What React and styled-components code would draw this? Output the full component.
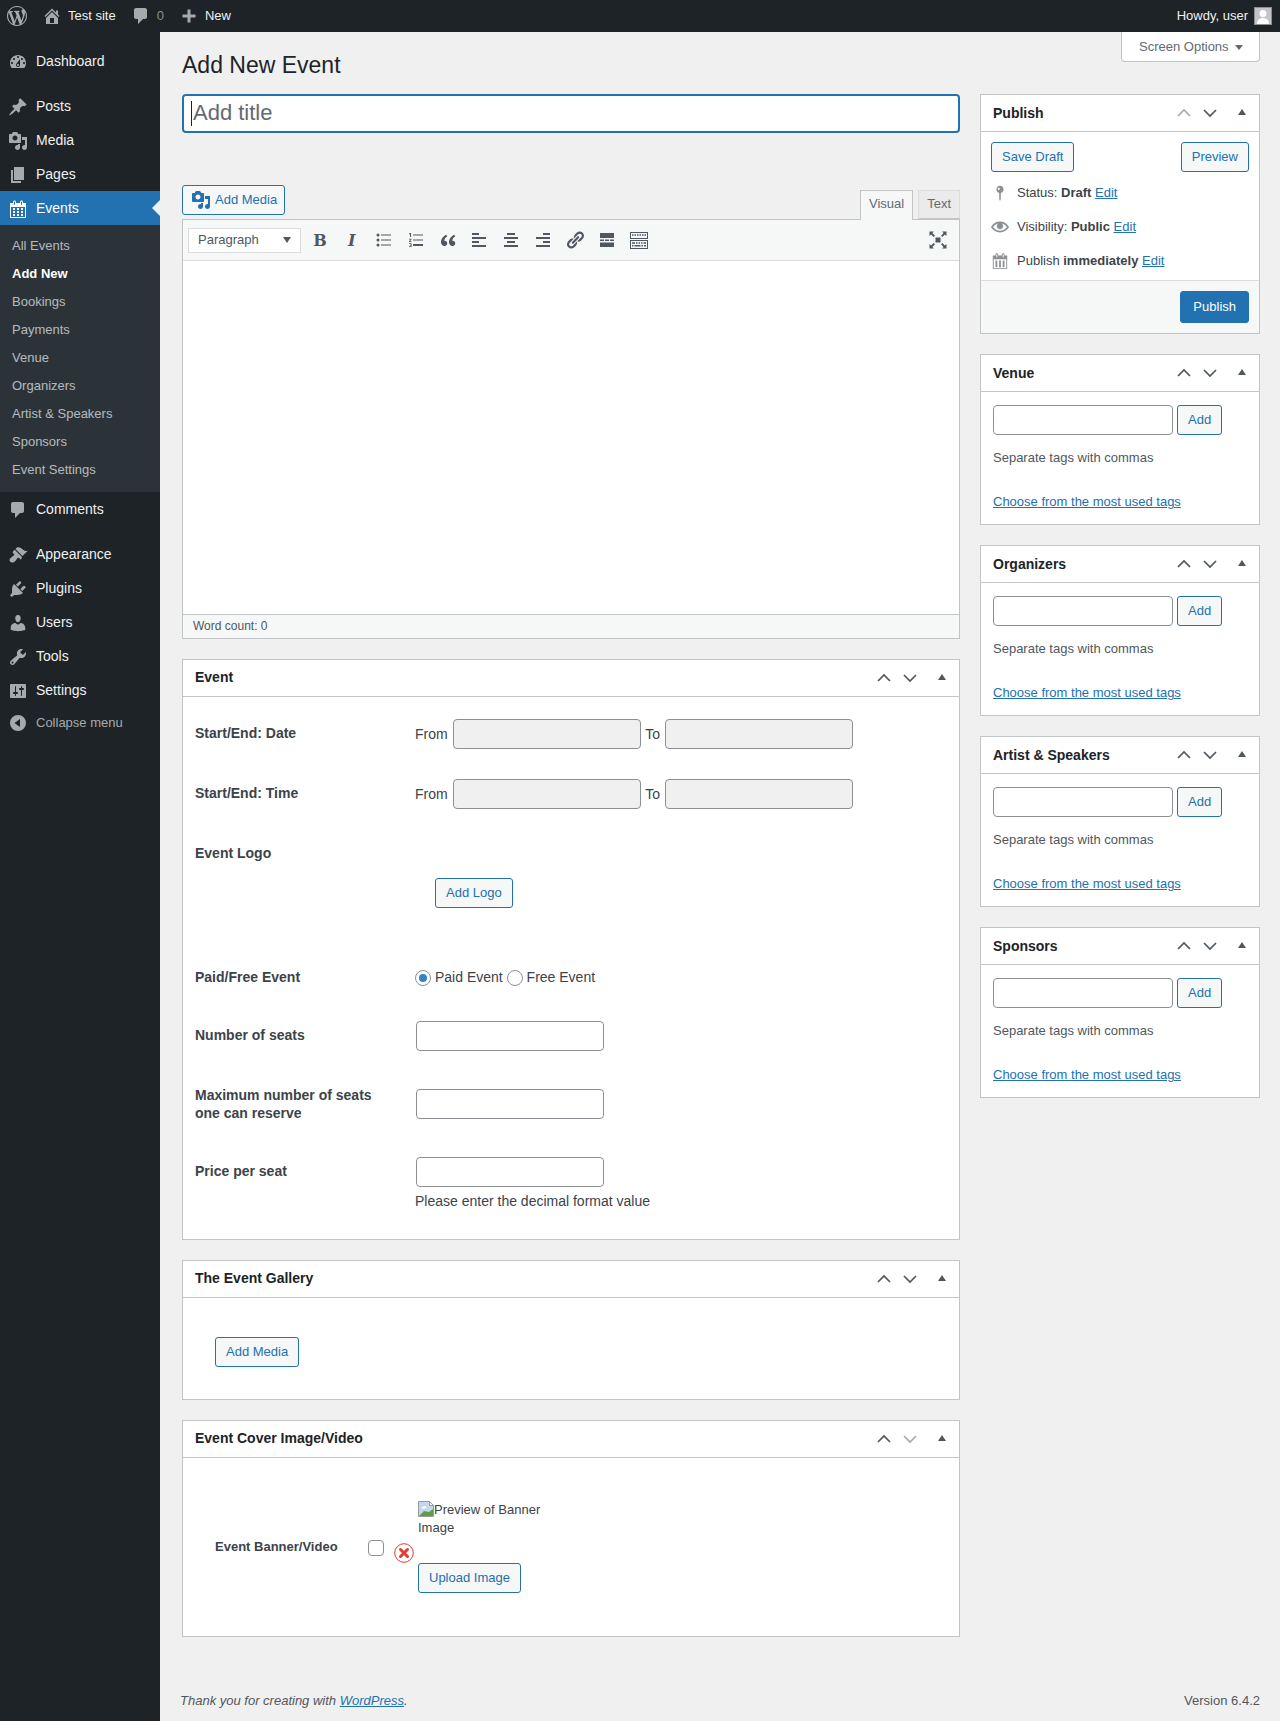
import React from 'react'
import styled, { createGlobalStyle } from 'styled-components'

const GlobalStyle = createGlobalStyle`
  * { box-sizing: border-box; }
  html, body { margin: 0; padding: 0; background: #f0f0f1; }
  body { font-family: "Liberation Sans", Arial, sans-serif; font-size: 13px; color: #3c434a; line-height: 1.4; }
`

const P = {
  logo: 'M20 10c0-5.51-4.49-10-10-10C4.48 0 0 4.49 0 10c0 5.52 4.48 10 10 10 5.51 0 10-4.48 10-10zM7.78 15.37L4.37 6.22c.55-.02 1.17-.08 1.17-.08.5-.06.44-1.13-.06-1.11 0 0-1.45.11-2.37.11-.18 0-.37 0-.58-.01C4.12 2.69 6.87 1.11 10 1.11c2.33 0 4.45.87 6.05 2.34-.68-.11-1.65.39-1.65 1.58 0 .74.45 1.36.9 2.1.35.61.55 1.36.55 2.46 0 1.49-1.4 5-1.4 5l-3.03-8.37c.54-.02.82-.17.82-.17.5-.05.44-1.25-.06-1.22 0 0-1.44.12-2.38.12-.87 0-2.33-.12-2.33-.12-.5-.03-.56 1.2-.06 1.22l.92.08 1.26 3.41zM17.41 10c.24-.64.74-1.87.43-4.25.7 1.29 1.05 2.71 1.05 4.25 0 3.29-1.73 6.24-4.4 7.78.97-2.59 1.94-5.2 2.92-7.78zM6.1 18.09C3.12 16.65 1.11 13.53 1.11 10c0-1.3.23-2.48.72-3.59C3.25 10.3 4.67 14.2 6.1 18.09zm4.03-6.63l2.58 6.98c-.86.29-1.76.45-2.71.45-.79 0-1.57-.11-2.29-.33.81-2.38 1.62-4.74 2.42-7.1z',
  home: 'M16 8.5l1.53 1.53-1.06 1.06L10 4.62l-6.47 6.47-1.06-1.06L10 2.5l4 4v-2h2v4zm-6-2.46l6 5.99V18H4v-5.97zM12 17v-5H8v5h4z',
  comment: 'M5 2h9c1.1 0 2 .9 2 2v7c0 1.1-.9 2-2 2h-2l-5 5v-5H5c-1.1 0-2-.9-2-2V4c0-1.1.9-2 2-2z',
  plus: 'M16.5 8.5v3h-5v5h-3v-5h-5v-3h5v-5h3v5z',
  dashboard: 'M3.76 16h12.48c1.1-1.37 1.76-3.11 1.76-5 0-4.42-3.58-8-8-8s-8 3.58-8 8c0 1.89.66 3.63 1.76 5zM10 4c.55 0 1 .45 1 1s-.45 1-1 1-1-.45-1-1 .45-1 1-1zM6 6c.55 0 1 .45 1 1s-.45 1-1 1-1-.45-1-1 .45-1 1-1zm8 0c.55 0 1 .45 1 1s-.45 1-1 1-1-.45-1-1 .45-1 1-1zm-5.37 5.55L12 7v6c0 1.1-.9 2-2 2s-2-.9-2-2c0-.57.24-1.08.63-1.45zM4 10c.55 0 1 .45 1 1s-.45 1-1 1-1-.45-1-1 .45-1 1-1zm12 0c.55 0 1 .45 1 1s-.45 1-1 1-1-.45-1-1 .45-1 1-1zm-5 3c0-.55-.45-1-1-1s-1 .45-1 1 .45 1 1 1 1-.45 1-1z',
  post: 'M10.44 3.02l1.82-1.82 6.36 6.35-1.83 1.82c-1.05-.68-2.48-.57-3.41.36l-.75.75c-.92.93-1.04 2.35-.35 3.41l-1.83 1.82-2.41-2.41-2.8 2.79c-.42.42-3.38 2.71-3.8 2.29s1.86-3.39 2.28-3.81l2.79-2.79L4.1 9.36l1.83-1.82c1.05.69 2.48.57 3.4-.36l.75-.75c.93-.92 1.05-2.35.36-3.41z',
  media: 'M13 11V4c0-.55-.45-1-1-1h-1.67L9 1H5L3.67 3H2c-.55 0-1 .45-1 1v7c0 .55.45 1 1 1h10c.55 0 1-.45 1-1zM7 4.5c1.38 0 2.5 1.12 2.5 2.5S8.38 9.5 7 9.5 4.5 8.38 4.5 7 5.62 4.5 7 4.5zM14 6h5v10.5c0 1.38-1.12 2.5-2.5 2.5S14 17.88 14 16.5s1.12-2.5 2.5-2.5c.17 0 .34.02.5.05V9h-3V6zm-4 8.05V13h2v3.5c0 1.38-1.12 2.5-2.5 2.5S7 17.88 7 16.5 8.12 14 9.5 14c.17 0 .34.02.5.05z',
  page: 'M6 15V2h10v13H6zm-1 1h8v2H3V5h2v11z',
  calendar: 'M15 4h3v15H2V4h3V3c0-.41.15-.76.44-1.06.29-.29.65-.44 1.06-.44s.77.15 1.06.44c.29.3.44.65.44 1.06v1h4V3c0-.41.15-.76.44-1.06.29-.29.65-.44 1.06-.44s.77.15 1.06.44c.29.3.44.65.44 1.06v1zM6 3v2.5c0 .14.05.26.15.36.09.09.21.14.35.14s.26-.05.35-.14c.1-.1.15-.22.15-.36V3c0-.14-.05-.26-.15-.35-.09-.1-.21-.15-.35-.15s-.26.05-.35.15c-.1.09-.15.21-.15.35zm7 0v2.5c0 .14.05.26.14.36.1.09.22.14.36.14s.26-.05.36-.14c.09-.1.14-.22.14-.36V3c0-.14-.05-.26-.14-.35-.1-.1-.22-.15-.36-.15s-.26.05-.36.15c-.09.09-.14.21-.14.35zm4 15V8H3v10h14zM7 9v2H5V9h2zm2 0h2v2H9V9zm4 2V9h2v2h-2zm-6 1v2H5v-2h2zm2 0h2v2H9v-2zm4 2v-2h2v2h-2zm-6 1v2H5v-2h2zm4 2H9v-2h2v2zm4 0h-2v-2h2v2z',
  appearance: 'M14.48 11.06L7.41 3.99l1.5-1.5c.5-.56 2.3-.47 3.51.32 1.21.8 1.43 1.28 2.91 2.1 1.18.64 2.45 1.26 4.45.85zm-.71.71L6.7 4.7 4.93 6.47c-.39.39-.39 1.02 0 1.41l1.06 1.06c.39.39.39 1.03 0 1.42-.6.6-1.43 1.11-2.21 1.69-.35.26-.7.53-1.01.84C1.43 13.23.99 15.6 2.21 16.82c1.22 1.22 3.59.78 4.93-.56.31-.31.58-.66.84-1.01.58-.78 1.09-1.61 1.69-2.21.39-.39 1.03-.39 1.42 0l1.06 1.06c.39.39 1.02.39 1.41 0z',
  plugins: 'M13.11 4.36L9.87 7.6 8 5.73l3.24-3.24c.35-.34 1.05-.2 1.56.32.52.51.66 1.21.31 1.55zm-8 1.77l.91-1.12 9.01 9.01-1.19.84c-.71.71-2.63 1.16-3.82 1.16H6.14L4.9 17.26c-.59.59-1.54.59-2.12 0-.59-.58-.59-1.53 0-2.12l1.24-1.24v-3.88c0-1.13.4-3.19 1.09-3.89zm7.26 3.97l3.24-3.24c.34-.35 1.04-.21 1.55.31.52.51.66 1.21.31 1.55l-3.24 3.25z',
  users: 'M10 9.25c-2.27 0-2.73-3.44-2.73-3.44C7 4.02 7.82 2 9.97 2c2.16 0 2.98 2.02 2.71 3.81 0 0-.41 3.44-2.68 3.44zm0 2.57L12.72 10c2.39 0 4.52 2.33 4.52 4.53v2.49s-3.65 1.13-7.24 1.13c-3.65 0-7.24-1.13-7.24-1.13v-2.49c0-2.25 1.94-4.48 4.47-4.48z',
  tools: 'M16.68 9.77c-1.34 1.34-3.3 1.67-4.95.99l-5.41 6.52c-.99.99-2.59.99-3.58 0s-.99-2.59 0-3.57l6.52-5.42c-.68-1.65-.35-3.61.99-4.95 1.28-1.28 3.12-1.62 4.72-1.06l-2.89 2.89 2.82 2.82 2.86-2.87c.53 1.58.18 3.39-1.08 4.65zM3.81 16.21c.4.39 1.04.39 1.43 0 .4-.4.4-1.04 0-1.43-.39-.4-1.03-.4-1.43 0-.39.39-.39 1.03 0 1.43z',
  settings: 'M18 16V4c0-.55-.45-1-1-1H3c-.55 0-1 .45-1 1v12c0 .55.45 1 1 1h14c.55 0 1-.45 1-1zM8 11h1c.55 0 1 .45 1 1s-.45 1-1 1H8v1.5c0 .28-.22.5-.5.5s-.5-.22-.5-.5V13H6c-.55 0-1-.45-1-1s.45-1 1-1h1V5.5c0-.28.22-.5.5-.5s.5.22.5.5V11zm5-2h-1c-.55 0-1-.45-1-1s.45-1 1-1h1V5.5c0-.28.22-.5.5-.5s.5.22.5.5V7h1c.55 0 1 .45 1 1s-.45 1-1 1h-1v5.5c0 .28-.22.5-.5.5s-.5-.22-.5-.5V9z',
  collapse: 'M10 2a8 8 0 1 0 0 16 8 8 0 0 0 0-16zm2 4v8L6.5 10z',
  link: 'M17.74 2.76c1.68 1.69 1.68 4.41 0 6.1l-1.53 1.52c-1.12 1.12-2.7 1.47-4.14 1.09l2.62-2.61.76-.77.76-.76c.84-.84.84-2.2 0-3.04-.84-.85-2.2-.85-3.04 0l-.77.76-3.38 3.38c-.37-1.44-.02-3.02 1.1-4.14l1.52-1.53c1.69-1.68 4.42-1.68 6.1 0zM8.59 13.43l5.34-5.34c.42-.42.42-1.1 0-1.52-.44-.43-1.13-.39-1.53 0l-5.33 5.34c-.42.42-.42 1.1 0 1.52.44.43 1.13.39 1.52 0zm-.76 2.29l4.14-4.15c.38 1.44.03 3.02-1.09 4.14l-1.52 1.53c-1.69 1.68-4.41 1.68-6.1 0-1.68-1.68-1.68-4.42 0-6.1l1.53-1.52c1.12-1.12 2.7-1.47 4.14-1.1l-4.14 4.15c-.85.84-.85 2.2 0 3.05.84.84 2.2.84 3.04 0z',
  ul: 'M4 3.5a1.5 1.5 0 1 1 0 3 1.5 1.5 0 0 1 0-3zm0 5a1.5 1.5 0 1 1 0 3 1.5 1.5 0 0 1 0-3zm0 5a1.5 1.5 0 1 1 0 3 1.5 1.5 0 0 1 0-3zM7 4.5h10v1H7zm0 5h10v1H7zm0 5h10v1H7z',
  ol: 'M7 4.5h10v1H7zm0 5h10v1H7zm0 4.5h10v2H7zM4 3h1v4H4V4.2H3v-.6zM3 8.8h2.5v.8L4 11.2h1.5v.8H3v-.8l1.5-1.6H3zm0 4.5h2.5V17H3v-.7h1.6v-.7h-.9V15h.9v-1H3z',
  quote: 'M9.3 13.3c0 1.5-1.2 2.7-2.7 2.7C4.7 16 3 14.5 3 12.2 3 9 5.4 6 8.3 4.8l.9 1.6C7.5 7.3 6.4 8.7 6.2 10.7c1.7-.3 3.1 1 3.1 2.6zm8 0c0 1.5-1.2 2.7-2.7 2.7-1.9 0-3.6-1.5-3.6-3.8C11 9 13.4 6 16.3 4.8l.9 1.6c-1.7.9-2.8 2.3-3 4.3 1.7-.3 3.1 1 3.1 2.6z',
  alignLeft: 'M3 3h7v2H3zm0 4h14v2H3zm0 4h7v2H3zm0 4h14v2H3z',
  alignCenter: 'M6 3h8v2H6zM3 7h14v2H3zm3 4h8v2H6zM3 15h14v2H3z',
  alignRight: 'M10 3h7v2h-7zM3 7h14v2H3zm7 4h7v2h-7zM3 15h14v2H3z',
  more: 'M3 3h14v5H3zm0 6.5h4V11H3zm5 0h4V11H8zm5 0h4V11h-4zM3 12.5h14V17H3z',
  kitchen: 'M1 2h18v7H1zm1 1v5h16V3zm1 1.2h1.5v1.5H3zm2.5 0H7v1.5H5.5zm2.5 0h1.5v1.5H8zm2.5 0H12v1.5h-1.5zm2.5 0h1.5v1.5H13zm2.5 0H17v1.5h-1.5zM1 10h18v9H1zm1 1v7h16v-7zm1 1.2h3v1.5H3zm4 0h1.5v1.5H7zm2.5 0H11v1.5H9.5zm2.5 0h1.5v1.5H12zm2.5 0H17v1.5h-2.5zM3 15h1.5v1.5H3zm2.5 0h6v1.5h-6zm7 0H14v1.5h-1.5zm2.5 0h2v1.5h-2z',
  fullscreen: 'M1 1.5h5L4.4 3.1 7 5.7 5.7 7 3.1 4.4 1.5 6V1.5zm13 0h4.5V6l-1.6-1.6L14.3 7 13 5.7l2.6-2.6zM7.5 7.5h5v5h-5zM5.7 13 7 14.3l-2.6 2.6L6 18.5H1.5V14l1.6 1.6zm8.6 0 2.6 2.6 1.6-1.6v4.5H14l1.6-1.6L13 14.3z',
  pin: 'M14 6c0-2.21-1.79-4-4-4S6 3.79 6 6c0 1.91 1.34 3.5 3.13 3.9L9.2 17l.8 2 .8-2 .07-7.1C12.66 9.5 14 7.91 14 6zM8.6 4.2a1.2 1.2 0 1 1 0 2.4 1.2 1.2 0 0 1 0-2.4z',
  eye: 'M19.7 9.4C17.7 6 14 3.9 10 3.9S2.3 6 .3 9.4L0 10l.3.6c2 3.4 5.7 5.5 9.7 5.5s7.7-2.1 9.7-5.5l.3-.6-.3-.6zM10 14.1c-3.1 0-6-1.6-7.7-4.1C3.6 8 5.7 6.6 8 6.1c-.9.6-1.5 1.7-1.5 2.9 0 1.9 1.6 3.5 3.5 3.5s3.5-1.6 3.5-3.5c0-1.2-.6-2.2-1.5-2.9 2.3.5 4.4 1.9 5.7 3.9-1.7 2.5-4.6 4.1-7.7 4.1z',
  schedule: 'M15 4h3v15H2V4h3V3c0-.8.7-1.5 1.5-1.5S8 2.2 8 3v1h4V3c0-.8.7-1.5 1.5-1.5S15 2.2 15 3zM6 2.5V6h1V2.5zm7 0V6h1V2.5zM17 18V8H3v10zM5 9.5h2V17H5zm4 0h2V17H9zm4 0h2V17h-2z',
}

const Ico = ({ d, size = 20 }) => (
  <svg width={size} height={size} viewBox="0 0 20 20" fill="currentColor" fillRule="evenodd" aria-hidden="true">
    <path d={d} />
  </svg>
)

const Page = styled.div`
  width: 1280px;
  min-height: 1721px;
  display: flex;
  flex-direction: column;
`
const AdminBar = styled.header`
  height: 32px;
  background: #1d2327;
  color: #f0f0f1;
  display: flex;
  align-items: center;
  justify-content: space-between;
  padding: 0 8px 0 7px;
`
const BarGroup = styled.div`
  display: flex;
  align-items: center;
`
const BarItem = styled.span`
  display: flex;
  align-items: center;
  margin-left: ${p => p.$ml || 0}px;
  color: ${p => p.$dim ? '#8c8f94' : '#f0f0f1'};
  svg { color: #a7aaad; display: block; }
`
const BarText = styled.span`
  margin-left: ${p => p.$ml || 0}px;
`
const Avatar = styled.span`
  width: 18px;
  height: 18px;
  margin-left: 6px;
  background: #c3c4c7;
  border: 1px solid #8c8f94;
  color: #fff;
  display: block;
  svg { display: block; }
`
const Shell = styled.div`
  flex: 1;
  display: flex;
`
const Sidebar = styled.nav`
  width: 160px;
  flex: none;
  background: #1d2327;
  padding-top: 12px;
`
const MenuItem = styled.div`
  position: relative;
  height: ${p => p.$h || 34}px;
  margin-top: ${p => p.$gap || 0}px;
  display: flex;
  align-items: center;
  gap: 8px;
  padding: 2px 0 0 8px;
  font-size: 14px;
  color: ${p => p.$active ? '#fff' : '#f0f0f1'};
  background: ${p => p.$active ? '#2271b1' : 'transparent'};
  svg { color: ${p => p.$active ? '#fff' : '#a7aaad'}; display: block; flex: none; }
  ${p => p.$active && `
    &::after {
      content: '';
      position: absolute;
      right: 0;
      top: 9px;
      border: 8px solid transparent;
      border-right-color: #f0f0f1;
      border-left-width: 0;
    }
  `}
`
const CollapseLabel = styled.span`
  font-size: 13px;
  color: #a7aaad;
`
const SubMenu = styled.div`
  background: #2c3338;
  padding: 7px 0 8px;
`
const SubItem = styled.div`
  height: 28px;
  line-height: 28px;
  padding-left: 12px;
  font-size: 13px;
  color: ${p => p.$current ? '#fff' : 'rgba(240,246,252,.7)'};
  font-weight: ${p => p.$current ? 600 : 400};
`
const Main = styled.main`
  flex: 1;
  display: flex;
  flex-direction: column;
  padding: 0 20px;
`
const ScreenBar = styled.div`
  display: flex;
  justify-content: flex-end;
`
const ScreenTab = styled.div`
  width: 139px;
  height: 30px;
  background: #fff;
  border: 1px solid #c3c4c7;
  border-top: none;
  border-radius: 0 0 4px 4px;
  padding: 1px 0 0 17px;
  display: flex;
  align-items: center;
  gap: 6px;
  color: #646970;
  &::after {
    content: '';
    border: 4px solid transparent;
    border-top: 5px solid #646970;
    border-bottom: none;
  }
`
const Heading = styled.h1`
  margin: -11px 0 14px 2px;
  font-size: 23px;
  font-weight: 400;
  line-height: 29px;
  color: #1d2327;
`
const Columns = styled.div`
  display: flex;
  gap: 20px;
  padding-left: 2px;
  align-items: flex-start;
`
const LeftCol = styled.div`
  width: 778px;
  flex: none;
`
const RightCol = styled.aside`
  width: 280px;
  flex: none;
`
const TitleBox = styled.div`
  height: 39px;
  background: #fff;
  border: 2px solid #2271b1;
  border-radius: 4px;
  padding-left: 7px;
  display: flex;
  align-items: center;
  font-size: 22px;
  color: #646970;
  margin-bottom: 52px;
`
const Caret = styled.span`
  width: 1px;
  height: 25px;
  background: #1d2327;
  margin-right: 1px;
`
const EditorTop = styled.div`
  display: flex;
  justify-content: space-between;
  align-items: flex-end;
  height: 34px;
`
const Btn = styled.button`
  height: 30px;
  padding: 0 10px 2px;
  font: 13px "Liberation Sans", Arial, sans-serif;
  color: #2271b1;
  background: #f6f7f7;
  border: 1px solid #2271b1;
  border-radius: 3px;
  display: inline-flex;
  align-items: center;
  gap: 5px;
  margin-left: ${p => p.$ml || 0}px;
  margin-top: ${p => p.$mt || 0}px;
`
const MediaBtn = styled(Btn)`
  align-self: flex-start;
  padding: 0 7px 2px 8px;
  gap: 4px;
  svg { margin-top: 2px; }
`
const Tabs = styled.div`
  display: flex;
  gap: 5px;
  margin-bottom: -1px;
  position: relative;
`
const Tab = styled.div`
  height: ${p => p.$active ? 30 : 29}px;
  margin-bottom: ${p => p.$active ? 0 : 1}px;
  padding: 0 8px;
  line-height: 26px;
  background: ${p => p.$active ? '#f6f7f7' : '#ebebeb'};
  border: 1px solid ${p => p.$active ? '#c3c4c7' : '#dcdcde'};
  border-bottom: ${p => p.$active ? 'none' : '1px solid #c3c4c7'};
  color: #646970;
`
const Editor = styled.div`
  border: 1px solid #c3c4c7;
  background: #fff;
`
const Toolbar = styled.div`
  height: 41px;
  background: #f6f7f7;
  border-bottom: 1px solid #dcdcde;
  display: flex;
  align-items: center;
  padding-left: 5px;
  color: #50575e;
`
const FormatSelect = styled.div`
  width: 113px;
  height: 25px;
  background: #fff;
  border: 1px solid #dcdcde;
  padding: 0 9px;
  display: flex;
  align-items: center;
  justify-content: space-between;
  color: #50575e;
  margin-right: 3px;
  &::after {
    content: '';
    border: 4.5px solid transparent;
    border-top: 6px solid #50575e;
    border-bottom: none;
  }
`
const ToolBtn = styled.span`
  width: 31.9px;
  height: 24px;
  display: flex;
  align-items: center;
  justify-content: center;
  svg { display: block; }
`
const ToolGlyph = styled(ToolBtn)`
  font: ${p => p.$italic ? 'italic' : 'normal'} bold 16px "DejaVu Serif", serif;
`
const ToolEnd = styled(ToolBtn)`
  margin-left: auto;
  margin-right: 5px;
`
const EditorBody = styled.div`
  height: 353px;
`
const WordCount = styled.div`
  height: 24px;
  line-height: 22px;
  padding-left: 10px;
  font-size: 12px;
  background: #f6f7f7;
  border-top: 1px solid #c3c4c7;
  color: #50575e;
`
const Box = styled.section`
  background: #fff;
  border: 1px solid #c3c4c7;
  margin-top: ${p => p.$mt ?? 20}px;
`
const BoxHead = styled.div`
  height: 37px;
  border-bottom: 1px solid #c3c4c7;
  display: flex;
  align-items: center;
  padding-left: 12px;
  font-size: 14px;
  font-weight: 700;
  color: #1d2327;
`
const BoxTitle = styled.span`
  flex: 1;
  padding-top: ${p => p.$side ? 1 : 0}px;
`
const Handle = styled.span`
  width: ${p => p.$wide ? 36 : 26}px;
  height: 36px;
  display: flex;
  align-items: center;
  justify-content: center;
  color: ${p => p.$off ? '#a7aaad' : '#50575e'};
  svg { display: block; }
`
const Toggle = styled.svg`
  margin: -3px 0 0 1px;
`
const EventBody = styled.div`
  padding: 22px 12px 29px;
`
const FieldRow = styled.div`
  display: grid;
  grid-template-columns: 220px 1fr;
  font-size: 14px;
  margin-bottom: ${p => p.$mb || 0}px;
`
const FieldLabel = styled.div`
  font-weight: 700;
  color: #3c434a;
  line-height: ${p => p.$tight ? 18 : 20}px;
  margin-top: ${p => p.$tight ? -3 : 4}px;
  padding-right: 30px;
`
const FieldValue = styled.div`
  display: flex;
  align-items: center;
  align-self: start;
  flex-wrap: wrap;
  min-height: 30px;
`
const FieldStack = styled.div`
  display: flex;
  flex-direction: column;
  align-items: flex-start;
`
const Input = styled.input`
  width: ${p => p.$w || 188}px;
  height: 30px;
  margin: 0 ${p => p.$flush ? 0 : 1}px;
  padding: 0 8px;
  background: ${p => p.$grey ? '#f0f0f1' : '#fff'};
  border: 1px solid #8c8f94;
  border-radius: 4px;
  outline: none;
  display: block;
`
const InlineText = styled.span`
  white-space: pre;
  padding-top: ${p => p.$low ? 2 : 0}px;
`
const Hint = styled.div`
  margin-top: 5px;
  line-height: 18px;
`
const Radio = styled.span`
  width: 16px;
  height: 16px;
  border: 1px solid #8c8f94;
  border-radius: 50%;
  background: #fff;
  display: flex;
  align-items: center;
  justify-content: center;
  margin-right: 4px;
  &::before {
    content: '';
    width: 8px;
    height: 8px;
    border-radius: 50%;
    background: ${p => p.$on ? '#3582c4' : 'transparent'};
  }
`
const GalleryBody = styled.div`
  padding: 39px 32px 32px;
`
const CoverBody = styled.div`
  padding: 43px 0 43px 32px;
  display: flex;
  align-items: center;
`
const CoverLabel = styled.div`
  width: 153px;
  font-weight: 700;
  color: #3c434a;
`
const Check = styled.span`
  width: 16px;
  height: 16px;
  margin: 2px 10px 0 0;
  border: 1px solid #8c8f94;
  border-radius: 4px;
  background: #fff;
`
const RemoveIcon = styled.svg`
  margin: 12px 4px 0 0;
  display: block;
`
const CoverCol = styled.div`
  width: 130px;
  display: flex;
  flex-direction: column;
  align-items: flex-start;
`
const AltText = styled.div`
  line-height: 18px;
  margin-bottom: 26px;
  svg { vertical-align: top; }
`
const PublishActions = styled.div`
  display: flex;
  justify-content: space-between;
  padding: 10px 10px 0;
`
const PubList = styled.div`
  padding: 4px 10px 2px;
`
const PubRow = styled.div`
  height: 34px;
  display: flex;
  align-items: center;
  gap: 8px;
  svg { color: #8c8f94; display: block; flex: none; }
`
const PubFooter = styled.div`
  background: #f6f7f7;
  border-top: 1px solid #dcdcde;
  padding: 10px;
  display: flex;
  justify-content: flex-end;
`
const PrimaryBtn = styled(Btn)`
  height: 32px;
  padding: 0 12px 2px;
  color: #fff;
  background: #2271b1;
`
const A = styled.a`
  color: #2271b1;
  text-decoration: underline;
`
const TagBody = styled.div`
  padding: 13px 12px 13px;
`
const TagRow = styled.div`
  display: flex;
  gap: 4px;
`
const TagHint = styled.div`
  margin-top: 14px;
  line-height: 18px;
  color: #50575e;
`
const TagLink = styled.div`
  margin-top: 26px;
  line-height: 18px;
`
const Footer = styled.footer`
  margin-top: auto;
  display: flex;
  justify-content: space-between;
  line-height: 18px;
  padding-bottom: 11px;
  color: #50575e;
`
const Thanks = styled.em`
  font-style: italic;
`

const Chevron = ({ up }) => (
  <svg width="16" height="10" viewBox="0 0 16 10" fill="none" stroke="currentColor" strokeWidth="1.7">
    <polyline points={up ? '2,8 8,2 14,8' : '2,2 8,8 14,2'} />
  </svg>
)

const Head = ({ title, upOff, downOff, side }) => (
  <BoxHead>
    <BoxTitle $side={side}>{title}</BoxTitle>
    <Handle $off={upOff}><Chevron up /></Handle>
    <Handle $off={downOff}><Chevron /></Handle>
    <Handle $wide>
      <Toggle width="8" height="6" viewBox="0 0 8 6" fill="currentColor"><polygon points="4,0 8,6 0,6" /></Toggle>
    </Handle>
  </BoxHead>
)

const TagBox = ({ title }) => (
  <Box>
    <Head title={title} side />
    <TagBody>
      <TagRow>
        <Input $w={180} $flush />
        <Btn>Add</Btn>
      </TagRow>
      <TagHint>Separate tags with commas</TagHint>
      <TagLink><A>Choose from the most used tags</A></TagLink>
    </TagBody>
  </Box>
)

const DateRange = () => (
  <FieldValue>
    <InlineText $low>From </InlineText>
    <Input $grey readOnly />
    <InlineText $low> To </InlineText>
    <Input $grey readOnly />
  </FieldValue>
)

const subItems = ['All Events', 'Add New', 'Bookings', 'Payments', 'Venue', 'Organizers', 'Artist & Speakers', 'Sponsors', 'Event Settings']
const toolIcons = [P.ul, P.ol, P.quote, P.alignLeft, P.alignCenter, P.alignRight, P.link, P.more, P.kitchen]
const tagBoxes = ['Venue', 'Organizers', 'Artist & Speakers', 'Sponsors']

const App = () => {
  return (
    <Page>
      <GlobalStyle />
      <AdminBar>
        <BarGroup>
          <BarItem><Ico d={P.logo} /></BarItem>
          <BarItem $ml={15}><Ico d={P.home} /></BarItem>
          <BarText $ml={6}>Test site</BarText>
          <BarItem $ml={15}><Ico d={P.comment} /></BarItem>
          <BarItem $ml={6} $dim>0</BarItem>
          <BarItem $ml={15}><Ico d={P.plus} /></BarItem>
          <BarText $ml={6}>New</BarText>
        </BarGroup>
        <BarGroup>
          Howdy, user
          <Avatar>
            <svg width="16" height="16" viewBox="0 0 16 16" fill="currentColor">
              <circle cx="8" cy="5.5" r="3.5" />
              <path d="M2 16c0-4 2.5-6 6-6s6 2 6 6z" />
            </svg>
          </Avatar>
        </BarGroup>
      </AdminBar>
      <Shell>
        <Sidebar>
          <MenuItem><Ico d={P.dashboard} />Dashboard</MenuItem>
          <MenuItem $gap={11}><Ico d={P.post} />Posts</MenuItem>
          <MenuItem><Ico d={P.media} />Media</MenuItem>
          <MenuItem><Ico d={P.page} />Pages</MenuItem>
          <MenuItem $active><Ico d={P.calendar} />Events</MenuItem>
          <SubMenu>
            {subItems.map(s => <SubItem key={s} $current={s === 'Add New'}>{s}</SubItem>)}
          </SubMenu>
          <MenuItem><Ico d={P.comment} />Comments</MenuItem>
          <MenuItem $gap={11}><Ico d={P.appearance} />Appearance</MenuItem>
          <MenuItem><Ico d={P.plugins} />Plugins</MenuItem>
          <MenuItem><Ico d={P.users} />Users</MenuItem>
          <MenuItem><Ico d={P.tools} />Tools</MenuItem>
          <MenuItem><Ico d={P.settings} />Settings</MenuItem>
          <MenuItem $h={30}><Ico d={P.collapse} /><CollapseLabel>Collapse menu</CollapseLabel></MenuItem>
        </Sidebar>
        <Main>
          <ScreenBar><ScreenTab>Screen Options</ScreenTab></ScreenBar>
          <Heading>Add New Event</Heading>
          <Columns>
            <LeftCol>
              <TitleBox><Caret />Add title</TitleBox>
              <EditorTop>
                <MediaBtn><Ico d={P.media} />Add Media</MediaBtn>
                <Tabs>
                  <Tab $active>Visual</Tab>
                  <Tab>Text</Tab>
                </Tabs>
              </EditorTop>
              <Editor>
                <Toolbar>
                  <FormatSelect>Paragraph</FormatSelect>
                  <ToolGlyph>B</ToolGlyph>
                  <ToolGlyph $italic>I</ToolGlyph>
                  {toolIcons.map(d => <ToolBtn key={d}><Ico d={d} /></ToolBtn>)}
                  <ToolEnd><Ico d={P.fullscreen} /></ToolEnd>
                </Toolbar>
                <EditorBody />
                <WordCount>Word count: 0</WordCount>
              </Editor>

              <Box>
                <Head title="Event" />
                <EventBody>
                  <FieldRow $mb={30}>
                    <FieldLabel>Start/End: Date</FieldLabel>
                    <DateRange />
                  </FieldRow>
                  <FieldRow $mb={30}>
                    <FieldLabel>Start/End: Time</FieldLabel>
                    <DateRange />
                  </FieldRow>
                  <FieldRow $mb={55}>
                    <FieldLabel>Event Logo</FieldLabel>
                    <FieldValue><Btn $ml={20} $mt={39}>Add Logo</Btn></FieldValue>
                  </FieldRow>
                  <FieldRow $mb={28}>
                    <FieldLabel>Paid/Free Event</FieldLabel>
                    <FieldValue>
                      <Radio $on />
                      <InlineText>Paid Event </InlineText>
                      <Radio />
                      <InlineText>Free Event</InlineText>
                    </FieldValue>
                  </FieldRow>
                  <FieldRow $mb={38}>
                    <FieldLabel>Number of seats</FieldLabel>
                    <FieldValue><Input /></FieldValue>
                  </FieldRow>
                  <FieldRow $mb={35}>
                    <FieldLabel $tight>Maximum number of seats one can reserve</FieldLabel>
                    <FieldValue><Input /></FieldValue>
                  </FieldRow>
                  <FieldRow>
                    <FieldLabel>Price per seat</FieldLabel>
                    <FieldStack>
                      <Input />
                      <Hint>Please enter the decimal format value</Hint>
                    </FieldStack>
                  </FieldRow>
                </EventBody>
              </Box>

              <Box>
                <Head title="The Event Gallery" />
                <GalleryBody><Btn>Add Media</Btn></GalleryBody>
              </Box>

              <Box>
                <Head title="Event Cover Image/Video" downOff />
                <CoverBody>
                  <CoverLabel>Event Banner/Video</CoverLabel>
                  <Check />
                  <RemoveIcon width="20" height="20" viewBox="0 0 20 20">
                    <circle cx="10" cy="10" r="9.3" fill="#fff" stroke="#e53935" strokeWidth="1" />
                    <path d="M6.5 6.5l7 7m0-7l-7 7" stroke="#e53935" strokeWidth="3" strokeLinecap="round" />
                  </RemoveIcon>
                  <CoverCol>
                    <AltText>
                      <svg width="16" height="16" viewBox="0 0 16 16">
                        <path d="M.5.5h11l4 4v11H.5z" fill="#c5d6ef" stroke="#9a9a9a" />
                        <path d="M1 15l5-5 5 1 4-3v7z" fill="#5f9e3f" />
                        <path d="M3 7q3-3 6-1l-3 2z" fill="#fff" />
                        <path d="M11.5.5v4h4z" fill="#fff" stroke="#9a9a9a" />
                      </svg>
                      Preview of Banner Image
                    </AltText>
                    <Btn>Upload Image</Btn>
                  </CoverCol>
                </CoverBody>
              </Box>
            </LeftCol>

            <RightCol>
              <Box $mt={0}>
                <Head title="Publish" upOff side />
                <PublishActions>
                  <Btn>Save Draft</Btn>
                  <Btn>Preview</Btn>
                </PublishActions>
                <PubList>
                  <PubRow><Ico d={P.pin} size={18} /><span>Status: <b>Draft</b> <A>Edit</A></span></PubRow>
                  <PubRow><Ico d={P.eye} size={18} /><span>Visibility: <b>Public</b> <A>Edit</A></span></PubRow>
                  <PubRow><Ico d={P.schedule} size={18} /><span>Publish <b>immediately</b> <A>Edit</A></span></PubRow>
                </PubList>
                <PubFooter><PrimaryBtn>Publish</PrimaryBtn></PubFooter>
              </Box>
              {tagBoxes.map(t => <TagBox key={t} title={t} />)}
            </RightCol>
          </Columns>
          <Footer>
            <Thanks>Thank you for creating with <A>WordPress</A>.</Thanks>
            <span>Version 6.4.2</span>
          </Footer>
        </Main>
      </Shell>
    </Page>
  )
}

export default App
